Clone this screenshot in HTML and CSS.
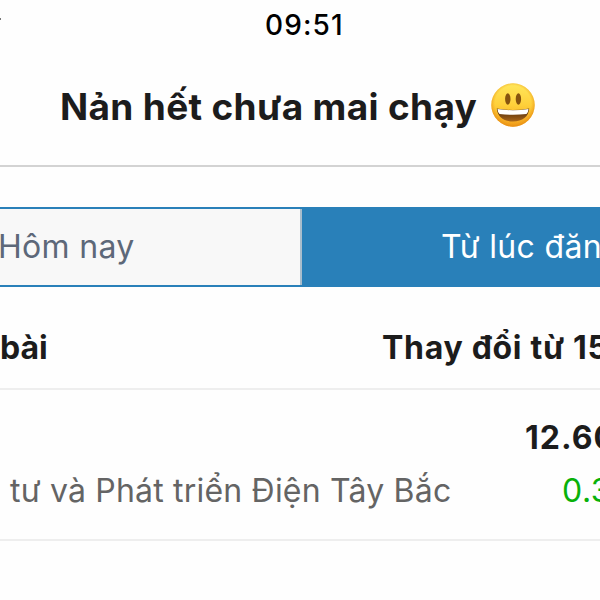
FILE: index.html
```html
<!DOCTYPE html>
<html lang="vi">
<head>
<meta charset="utf-8">
<title>Nản hết chưa mai chạy</title>
<link rel="stylesheet" href="styles.css">
</head>
<body>
<header class="status"><i class="signal"></i><time class="time">09:51</time></header>
<div class="title-bar">
  <h1 class="title">Nản hết chưa mai chạy</h1>
  <svg class="smile" viewBox="0 0 44 44" aria-hidden="true">
    <defs>
      <linearGradient id="face" x1="0" y1="0" x2="0" y2="1">
        <stop offset="0" stop-color="#ffe75c"/><stop offset=".5" stop-color="#ffd03a"/><stop offset="1" stop-color="#f3a01c"/>
      </linearGradient>
      <radialGradient id="rim" cx=".5" cy=".47" r=".53">
        <stop offset=".78" stop-color="#ed9d18" stop-opacity="0"/><stop offset="1" stop-color="#e48710" stop-opacity=".75"/>
      </radialGradient>
      <linearGradient id="mouth" x1="0" y1="0" x2="0" y2="1">
        <stop offset=".3" stop-color="#63380d"/><stop offset="1" stop-color="#a8651a"/>
      </linearGradient>
    </defs>
    <circle cx="22" cy="22" r="21.7" fill="url(#face)"/>
    <circle cx="22" cy="22" r="21.7" fill="url(#rim)"/>
    <ellipse cx="16.8" cy="16" rx="2.7" ry="5.8" fill="#86530f"/>
    <ellipse cx="27.4" cy="16" rx="2.7" ry="5.8" fill="#86530f"/>
    <path d="M5.800 25.500Q22 28.500 38.200 25.500C37.700 33.500 31.500 38.500 22 38.500S6.300 33.500 5.800 25.500Z" fill="url(#mouth)"/>
    <path d="M6.500 26Q22 28.500 37.500 26Q37.300 29.500 35.500 31Q22 32.500 8.500 31Q6.700 29.500 6.500 26Z" fill="#fff"/>
  </svg>
</div>
<nav class="tabs">
  <button class="tab tab-today"><span>Hôm nay</span></button>
  <button class="tab tab-active"><span>Từ lúc đăn</span></button>
</nav>
<main>
  <div class="heading"><span class="heading-post">bài</span><span class="heading-change">Thay đổi từ 15</span></div>
  <section class="stock">
    <strong class="price">12.60</strong>
    <div class="detail"><span class="company">tư và Phát triển Điện Tây Bắc</span><span class="gain">0.3</span></div>
  </section>
</main>
</body>
</html>
```
FILE: styles.css
```css
* { box-sizing: border-box; }
body {
  margin: 0;
  width: 600px;
  height: 600px;
  overflow: hidden;
  background: #fefefe;
  color: #1c1c1c;
  font-family: Inter, "Noto Sans", sans-serif;
  font-size: 32px;
  white-space: nowrap;
}
.status { display: flex; height: 50px; color: #000; }
.signal { width: 1px; height: 2px; margin-top: 18px; background: #777; }
.time { margin-left: 264px; font-size: 28px; line-height: 50px; font-weight: 500; letter-spacing: 1.1px; }
.title-bar {
  display: flex;
  height: 117px;
  padding: 0 0 2px 60px;
  border-bottom: 2px solid #d3d3d3;
}
.title { width: 431px; margin: 0; font-size: 37px; line-height: 113px; font-weight: 700; letter-spacing: 0.33px; }
.smile { width: 44px; height: 44px; margin-top: 33px; }
.tabs {
  display: flex;
  height: 80px;
  margin-top: 40px;
  border: solid #2980b9;
  border-width: 2px 0;
}
.tab {
  height: 76px;
  border: 0;
  padding: 0;
  text-align: left;
  font: 400 32px/76px Inter, "Noto Sans", sans-serif;
}
.tab-today { width: 302px; border-right: 2px solid #a9bdcc; background: #f8f8f8; color: #5d6879; text-indent: -2px; letter-spacing: 0.3px; }
.tab-active { width: 298px; padding-left: 139px; overflow: hidden; background: #2980b9; color: #fff; letter-spacing: 0.35px; }
.heading { display: flex; height: 81px; margin-top: 20px; line-height: 81px; font-weight: 700; overflow: hidden; }
.heading-post { flex: 0 0 382px; }
.heading-change { flex: none; letter-spacing: 0.7px; }
.stock {
  height: 153px;
  padding-top: 22px;
  border: solid #eeeeee;
  border-width: 2px 0;
  overflow: hidden;
}
.price { display: block; padding-left: 525px; line-height: 52px; letter-spacing: 1px; }
.detail { display: flex; line-height: 53px; }
.company { flex: 0 0 552px; padding-left: 10px; color: #646464; letter-spacing: 0.2px; }
.gain { flex: none; padding-left: 10px; color: #09b109; letter-spacing: 0.5px; }
```
